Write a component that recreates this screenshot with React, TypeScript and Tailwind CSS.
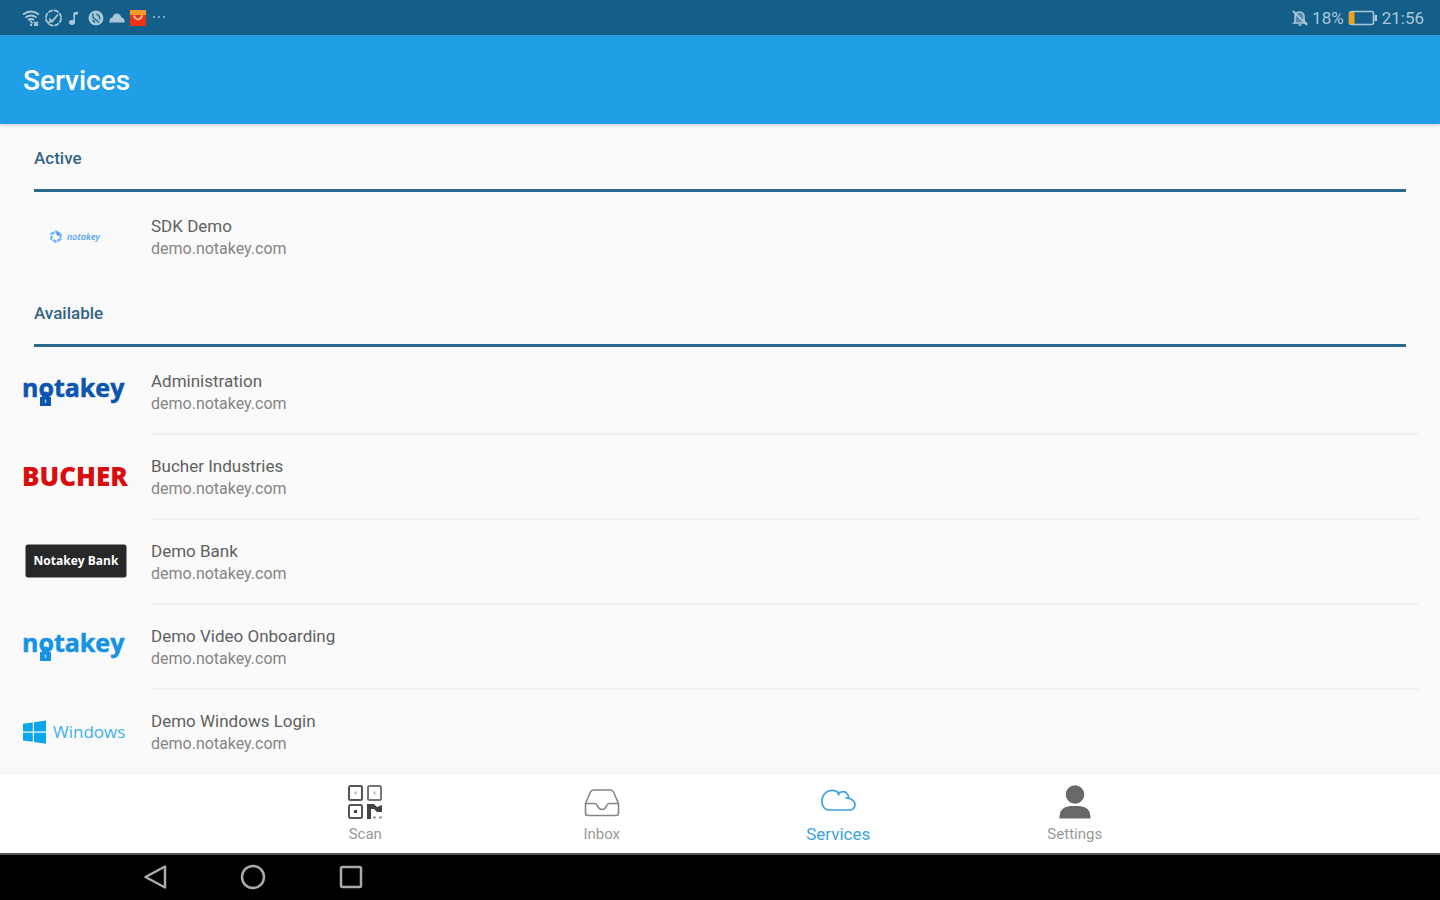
import type { ReactNode } from 'react';

type Service = {
  name: string;
  host: string;
  logo: ReactNode;
};

function NotakeyLogo({ color }: { color: string }) {
  return (
    <svg width="106" height="36" viewBox="0 0 106 36" role="img" aria-label="notakey" className="overflow-visible">
      <text
        x="-1"
        y="24"
        fontFamily="'Open Sans', sans-serif"
        fontSize="25"
        fontWeight="700"
        fill={color}
        stroke={color}
        strokeWidth="0.500"
      >
        notakey
      </text>
      <path d="M17 24h11v9H17z" fill={color} />
      <path d="M20 24v-2a2.500 2.500 0 0 1 5 0v2" fill="none" stroke={color} strokeWidth="2" />
      <path d="M22.500 26.500v3.500" stroke="#fafafa" strokeOpacity="0.6" strokeWidth="1.600" />
    </svg>
  );
}

function SdkLogo() {
  return (
    <svg width="106" height="36" viewBox="0 0 106 36" role="img" aria-label="notakey">
      <path
        d="M33 13.500l4.500 2.500v5l-4.500 2.800-4.500-2.800v-5z"
        fill="none"
        stroke="#73b2fb"
        strokeWidth="2.400"
        strokeDasharray="4 1"
      />
      <circle cx="35" cy="16" r="1.800" fill="#4f9df7" />
      <text x="44" y="22" fontFamily="'Open Sans', sans-serif" fontSize="9" fontWeight="600" fontStyle="italic" fill="#4f9df7">
        notakey
      </text>
    </svg>
  );
}

function BucherLogo() {
  return (
    <svg width="106" height="36" viewBox="0 0 106 36" role="img" aria-label="Bucher" className="overflow-visible">
      <text x="-1" y="28" fontFamily="'Open Sans', sans-serif" fontSize="26" fontWeight="800" fill="#d80d10">
        BUCHER
      </text>
    </svg>
  );
}

function BankLogo() {
  return (
    <svg width="106" height="36" viewBox="0 0 106 36" role="img" aria-label="Notakey Bank">
      <rect x="2.500" y="1.500" width="101" height="33" rx="2.500" fill="#26282a" />
      <text x="53" y="22" textAnchor="middle" fontFamily="'Open Sans', sans-serif" fontSize="12" fontWeight="700" fill="#fff">
        Notakey Bank
      </text>
    </svg>
  );
}

function WindowsLogo() {
  return (
    <svg width="106" height="36" viewBox="0 0 106 36" role="img" aria-label="Windows">
      <path
        d="M0 10.800l9.800-1.400v9.100H0zM11 9.200l12-1.700v11H11zM0 19.700h9.800v9.100L0 27.400zM11 19.700h12v11l-12-1.700z"
        fill="#0aa5ea"
      />
      <text x="30" y="25" fontFamily="'Open Sans', sans-serif" fontSize="17" fontWeight="400" fill="#3db2ea">
        Windows
      </text>
    </svg>
  );
}

const HOST = 'demo.notakey.com';

const active: Service[] = [{ name: 'SDK Demo', host: HOST, logo: <SdkLogo /> }];

const available: Service[] = [
  { name: 'Administration', host: HOST, logo: <NotakeyLogo color="#0b55ae" /> },
  { name: 'Bucher Industries', host: HOST, logo: <BucherLogo /> },
  { name: 'Demo Bank', host: HOST, logo: <BankLogo /> },
  { name: 'Demo Video Onboarding', host: HOST, logo: <NotakeyLogo color="#1593e2" /> },
  { name: 'Demo Windows Login', host: HOST, logo: <WindowsLogo /> },
];

function StatusBar() {
  return (
    <div className="flex h-[35px] shrink-0 items-center justify-between bg-[#145f8a] pl-[22px] pr-4 text-[#a9c6d8]">
      <div className="flex items-center gap-[3px]">
        <svg width="19" height="18" viewBox="0 0 19 18" fill="none" stroke="currentColor" strokeWidth="1.800">
          <path d="M1 5.500q8-6 16 0M3.500 8.500q5.500-4 11 0M6 11q3-2 6 0" />
          <path d="M8 11.500l2.500 3M12 13l4 3.500M16 13l-4 3.500M8 16h2" />
        </svg>
        <svg width="19" height="18" viewBox="0 0 19 18" fill="none" stroke="currentColor" strokeWidth="1.800">
          <circle cx="9.500" cy="9" r="7.600" strokeDasharray="5 1" />
          <path d="M5.500 9.500l2.500 3 6-7M4 14.500l3-3" />
        </svg>
        <svg width="18" height="18" viewBox="0 0 18 18" fill="currentColor">
          <ellipse cx="6" cy="13.500" rx="3" ry="2.400" />
          <path d="M7.300 13.500V3.500L12 2.500v2.800l-3 .7v7.500z" />
        </svg>
        <svg width="18" height="18" viewBox="0 0 18 18">
          <circle cx="9" cy="9" r="7.500" fill="currentColor" />
          <path d="M6 4.500v4l6 5M9.500 5l3 2.500v3M5.500 11l2.500 2.500" fill="none" stroke="#145f8a" strokeWidth="1.300" />
        </svg>
        <svg width="18" height="18" viewBox="0 0 18 18" fill="currentColor">
          <path d="M1.500 13.500v-2q0-2.500 3-3 1-4 4.500-4 3 0 4.500 4 3 .5 3 3v2z" />
        </svg>
        <svg width="18" height="18" viewBox="0 0 18 18">
          <path d="M1 1h16v16H1z" fill="#ee3113" />
          <path d="M1 1h16v5H1z" fill="#f59a2b" />
          <path d="M4.500 6.500q4.500 8 9 0" fill="none" stroke="#ffc9a0" strokeWidth="1.600" />
        </svg>
        <svg width="18" height="18" viewBox="0 0 18 18" fill="currentColor" fillOpacity="0.7">
          <path d="M3 7h2v2H3zM8 7h2v2H8zM13 7h2v2h-2z" />
        </svg>
      </div>
      <div className="flex items-center gap-1 text-[17px] leading-5">
        <svg width="16" height="18" viewBox="0 0 16 18" fill="none" stroke="currentColor" strokeWidth="1.600">
          <path d="M3 13V8a4.500 4.500 0 0 1 9-1v5l2 2H2zM6.500 16h3" fill="currentColor" fillOpacity="0.4" />
          <path d="M1 2l14 14" strokeWidth="1.800" />
        </svg>
        <span>18%</span>
        <svg width="30" height="18" viewBox="0 0 30 18">
          <rect x="1.500" y="2.500" width="24" height="13" rx="2" fill="none" stroke="currentColor" strokeWidth="1.600" />
          <path d="M1 3h5.500v12H1z" fill="#f5a11c" />
          <path d="M26.500 6H29v6h-2.500z" fill="currentColor" />
        </svg>
        <span>21:56</span>
      </div>
    </div>
  );
}

function ServiceSection({ title, services }: { title: string; services: Service[] }) {
  return (
    <section>
      <div className="mx-[34px] mb-[3px] flex h-[67px] items-center border-b-[3px] border-[#2b6a8f] pt-[2px]">
        <h2 className="text-[17px] font-medium leading-5 text-[#326583]">{title}</h2>
      </div>
      <ul>
        {services.map((service) => (
          <li key={service.name} className="group">
            <button type="button" className="flex h-[85px] w-full items-center pl-[23px] pr-[22px] text-left">
              <span className="w-32 shrink-0 pb-1">{service.logo}</span>
              <span className="flex h-full flex-1 flex-col justify-center border-b-2 border-[#efefef] pt-[3px] group-last:border-transparent">
                <span className="text-[17px] leading-[22px] text-[#606060]">{service.name}</span>
                <span className="text-base leading-6 text-[#858585]">{service.host}</span>
              </span>
            </button>
          </li>
        ))}
      </ul>
    </section>
  );
}

const tabs = [
  {
    label: 'Scan',
    icon: (
      <svg width="36" height="36" viewBox="0 0 36 36" fill="none" stroke="#555" strokeWidth="2">
        <rect x="2" y="2" width="13" height="14" rx="1.500" />
        <rect x="21" y="2" width="13" height="14" rx="1.500" stroke="#777" />
        <rect x="2" y="21" width="13" height="13" rx="1.500" />
        <path d="M8.500 7.500v3M27.500 7.500v3" stroke="#bbb" />
        <path d="M7 26h3v3H7z" fill="#444" stroke="none" />
        <path d="M20 20h7l3 3 5-2v7h-5l-3-3h-3v10h-4z" fill="#444" stroke="none" />
        <path d="M26 33.500h3M32 33.500h3" stroke="#999" />
      </svg>
    ),
  },
  {
    label: 'Inbox',
    icon: (
      <svg width="36" height="36" viewBox="0 0 36 36" fill="none" stroke="#858585" strokeWidth="1.600" strokeLinejoin="round">
        <path d="M1.500 19.500L6.500 8q.8-2 3-2h17q2.200 0 3 2l5 11.500V29q0 2.500-2.500 2.500H4q-2.500 0-2.500-2.500z" />
        <path d="M1.500 19.500h9.500q1.500 0 2.500 2.500 1.500 3.500 4.500 3.500t4.500-3.500q1-2.500 2.500-2.500h9.500" />
      </svg>
    ),
  },
  {
    label: 'Services',
    icon: (
      <svg width="36" height="36" viewBox="0 0 36 36" fill="none" stroke="#3aa2df" strokeWidth="1.700" strokeLinejoin="round">
        <path d="M8 26q-3.500-.5-5-4-1.500-3-1-6.500 1-6 6.500-8.500 6-2 10.500 2 5-3 8 .5 1.500 1.500 1.800 4.500 6.200 2.500 6.200 7-.5 5-5.500 5z" />
        <path d="M17.500 9.500l2 1.500M25.500 14q2-.5 3.500 1" />
      </svg>
    ),
  },
  {
    label: 'Settings',
    icon: (
      <svg width="36" height="36" viewBox="0 0 36 36" fill="#686868">
        <circle cx="18" cy="10.500" r="9.300" />
        <path d="M2.500 34.500v-2q0-9.500 11-10.500h9q11 1 11 10.500v2z" />
      </svg>
    ),
  },
];

function TabBar() {
  return (
    <nav className="shrink-0 border-t-2 border-[#f5f5f5] bg-white" aria-label="Main">
      <div className="mx-auto flex h-[79px] w-full max-w-[946px]">
        {tabs.map((tab) => (
          <button
            key={tab.label}
            type="button"
            aria-current={tab.label === 'Services' ? 'page' : undefined}
            className="flex flex-1 flex-col items-center gap-1 pt-[10px] text-[15px] leading-5 text-[#999] aria-[current=page]:text-[17px] aria-[current=page]:leading-5 aria-[current=page]:text-[#3aa2df]"
          >
            {tab.icon}
            {tab.label}
          </button>
        ))}
      </div>
    </nav>
  );
}

function SystemNav() {
  return (
    <div className="flex h-[47px] shrink-0 items-center gap-[70px] border-t-2 border-[#555] bg-black pb-[2px] pl-[141px]">
      <button type="button" aria-label="Back">
        <svg width="28" height="28" viewBox="0 0 28 28" fill="none" stroke="#ababab" strokeWidth="2.500" strokeLinejoin="round">
          <path d="M24 3.500v21L4.500 14z" />
        </svg>
      </button>
      <button type="button" aria-label="Home">
        <svg width="28" height="28" viewBox="0 0 28 28" fill="none" stroke="#ababab" strokeWidth="2.500">
          <circle cx="14" cy="14" r="11" />
        </svg>
      </button>
      <button type="button" aria-label="Recent apps">
        <svg width="28" height="28" viewBox="0 0 28 28" fill="none" stroke="#ababab" strokeWidth="2.500">
          <rect x="4" y="4" width="20" height="20" rx="1.500" />
        </svg>
      </button>
    </div>
  );
}

export default function App() {
  return (
    <div className="flex h-screen flex-col overflow-hidden bg-[#fafafa] font-['Roboto',sans-serif]">
      <StatusBar />
      <header className="z-10 flex h-[89px] shrink-0 items-center bg-[#209fe6] px-[23px] pt-[2px] shadow-[0_1px_4px_rgba(0,0,0,0.2)]">
        <h1 className="text-[28px] font-medium leading-8 text-white">Services</h1>
      </header>
      <main className="min-h-0 flex-1 overflow-hidden pt-px">
        <ServiceSection title="Active" services={active} />
        <ServiceSection title="Available" services={available} />
      </main>
      <TabBar />
      <SystemNav />
    </div>
  );
}
